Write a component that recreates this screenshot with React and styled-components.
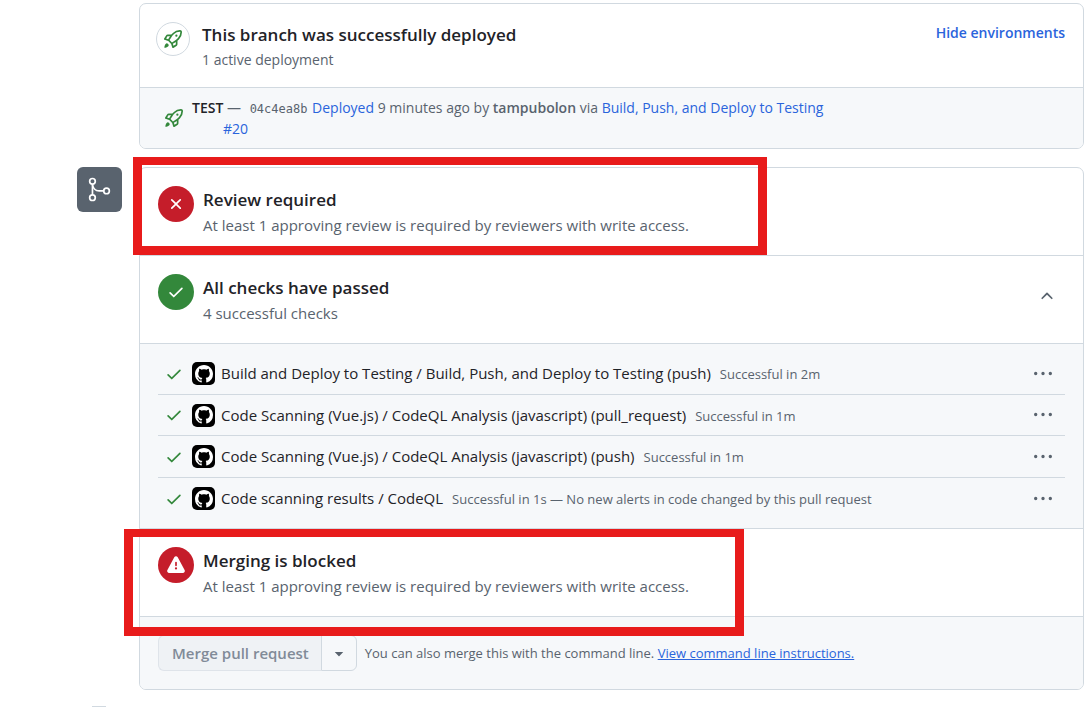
import React, { useState } from "react";
import styled, { createGlobalStyle, css } from "styled-components";
import { GoGitMerge } from "react-icons/go";

const color = {
  text: "#1f2328",
  muted: "#59636e",
  link: "#2a64dc",
  border: "#d1d9e0",
  subtle: "#f6f8fa",
  green: "#33883b",
  red: "#c51d2a",
  mark: "#e81b1b",
};

const GlobalStyle = createGlobalStyle`
  * { box-sizing: border-box; }
  body {
    margin: 0;
    background: #fff;
    color: ${color.text};
    font-family: "Open Sans", "Noto Sans", sans-serif;
    font-size: 15px;
    line-height: 22px;
  }
  h2, p, ul { margin: 0; padding: 0; }
  button { font: inherit; cursor: pointer; }
`;

const paths = {
  rocket:
    "M14.064 0h.186C15.216 0 16 .784 16 1.75v.186a8.752 8.752 0 0 1-2.564 6.186l-.458.459c-.314.314-.641.616-.979.904v3.207c0 .608-.315 1.172-.833 1.49l-2.774 1.707a.749.749 0 0 1-1.11-.418l-.954-3.102a1.214 1.214 0 0 1-.145-.125L3.754 9.816a1.218 1.218 0 0 1-.124-.145L.528 8.717a.749.749 0 0 1-.418-1.11l1.71-2.774A1.748 1.748 0 0 1 3.31 4h3.204c.288-.338.59-.665.904-.979l.459-.458A8.749 8.749 0 0 1 14.064 0ZM8.938 3.623h-.002l-.458.458c-.76.76-1.437 1.598-2.02 2.5l-1.5 2.317 2.143 2.143 2.317-1.5c.902-.583 1.74-1.26 2.499-2.02l.459-.458a7.25 7.25 0 0 0 2.123-5.127V1.75a.25.25 0 0 0-.25-.25h-.186a7.249 7.249 0 0 0-5.125 2.123ZM3.56 14.56c-.732.732-2.334 1.045-3.005 1.148a.234.234 0 0 1-.201-.064.234.234 0 0 1-.064-.201c.103-.671.416-2.273 1.15-3.003a1.502 1.502 0 1 1 2.12 2.12Zm6.94-3.935c-.088.06-.177.118-.266.175l-2.35 1.521.548 1.783 1.949-1.2a.25.25 0 0 0 .119-.213ZM3.678 8.116 5.2 5.766c.058-.09.117-.178.176-.266H3.309a.25.25 0 0 0-.213.119l-1.2 1.95ZM12 5a1 1 0 1 1-2 0 1 1 0 0 1 2 0Z",
  x: "M3.72 3.72a.75.75 0 0 1 1.06 0L8 6.94l3.22-3.22a.749.749 0 0 1 1.275.326.749.749 0 0 1-.215.734L9.06 8l3.22 3.22a.749.749 0 0 1-.326 1.275.749.749 0 0 1-.734-.215L8 9.06l-3.22 3.22a.751.751 0 0 1-1.042-.018.751.751 0 0 1-.018-1.042L6.94 8 3.72 4.78a.75.75 0 0 1 0-1.06Z",
  check:
    "M13.78 4.22a.75.75 0 0 1 0 1.06l-7.25 7.25a.75.75 0 0 1-1.06 0L2.22 9.28a.751.751 0 0 1 .018-1.042.751.751 0 0 1 1.042-.018L6 10.94l6.72-6.72a.75.75 0 0 1 1.06 0Z",
  alert:
    "M6.457 1.047c.659-1.234 2.427-1.234 3.086 0l6.082 11.378A1.75 1.75 0 0 1 14.082 15H1.918a1.75 1.75 0 0 1-1.543-2.575ZM8 5a.75.75 0 0 0-.75.75v2.5a.75.75 0 0 0 1.5 0v-2.5A.75.75 0 0 0 8 5Zm1 6a1 1 0 1 0-2 0 1 1 0 0 0 2 0Z",
  kebab:
    "M8 9a1.5 1.5 0 1 0 0-3 1.5 1.5 0 0 0 0 3ZM1.5 9a1.5 1.5 0 1 0 0-3 1.5 1.5 0 0 0 0 3Zm13 0a1.5 1.5 0 1 0 0-3 1.5 1.5 0 0 0 0 3Z",
  chevronUp:
    "M3.22 10.53a.749.749 0 0 1 0-1.06l4.25-4.25a.749.749 0 0 1 1.06 0l4.25 4.25a.749.749 0 1 1-1.06 1.06L8 6.811 4.28 10.53a.749.749 0 0 1-1.06 0Z",
  triangleDown:
    "m4.427 7.427 3.396 3.396a.25.25 0 0 0 .354 0l3.396-3.396A.25.25 0 0 0 11.396 7H4.604a.25.25 0 0 0-.177.427Z",
  github:
    "M8 0c4.42 0 8 3.58 8 8a8.013 8.013 0 0 1-5.45 7.59c-.4.08-.55-.17-.55-.38 0-.27.01-1.13.01-2.2 0-.75-.25-1.23-.54-1.48 1.78-.2 3.65-.88 3.65-3.95 0-.88-.31-1.59-.82-2.15.08-.2.36-1.02-.08-2.12 0 0-.67-.22-2.2.82-.64-.18-1.32-.27-2-.27-.68 0-1.36.09-2 .27-1.53-1.03-2.2-.82-2.2-.82-.44 1.1-.16 1.92-.08 2.12-.51.56-.82 1.28-.82 2.15 0 3.06 1.86 3.75 3.64 3.95-.23.2-.44.55-.51 1.07-.46.21-1.61.55-2.33-.66-.15-.24-.6-.83-1.23-.82-.67.01-.27.38.01.53.34.19.73.9.82 1.13.16.45.68 1.31 2.69.94 0 .67.01 1.3.01 1.49 0 .21-.15.45-.55.38A7.995 7.995 0 0 1 0 8c0-4.42 3.58-8 8-8Z",
};

const Svg = styled.svg`
  display: block;
  flex: none;
  fill: currentColor;
`;

function Icon({ name, size = 18 }) {
  return (
    <Svg viewBox="0 0 16 16" width={size} height={size} aria-hidden="true">
      <path d={paths[name]} />
    </Svg>
  );
}

const Timeline = styled.main`
  display: flex;
  flex-direction: column;
  gap: 18px;
  padding: 3px 6px 0 77px;
`;

const TimelineItem = styled.div`
  display: grid;
  grid-template-columns: 45px minmax(0, 1fr);
  column-gap: 17px;
`;

const MergeBadge = styled.div`
  display: grid;
  place-items: center;
  width: 45px;
  height: 45px;
  border-radius: 6px;
  background: ${color.muted};
  color: #fff;
`;

const Card = styled.section`
  grid-column: 2;
  border: 1px solid ${color.border};
  border-radius: 7px;
`;

const Section = styled.div`
  position: relative;
  display: flex;
  align-items: flex-start;
  gap: ${(p) => (p.$compact ? 12 : 9)}px;
  padding: ${(p) => (p.$compact ? "18px 18px 15px 16px" : "18px 18px 19px")};
  border-bottom: 1px solid ${color.border};
`;

const StatusCircle = styled.span`
  display: grid;
  place-items: center;
  flex: none;
  width: 36px;
  height: 36px;
  border-radius: 50%;
  color: #fff;
  background: ${(p) => p.$tone};
  ${(p) =>
    p.$outlined &&
    css`
      width: 34px;
      height: 34px;
      border: 1px solid ${color.border};
      background: #fff;
      color: ${color.green};
    `}
`;

const SectionText = styled.div`
  flex: 1;
  min-width: 0;
`;

const Title = styled.h2`
  font-size: 17px;
  line-height: ${(p) => (p.$compact ? 26 : 28)}px;
  font-weight: 600;
`;

const Description = styled.p`
  font-size: ${(p) => (p.$compact ? 14 : 15)}px;
  line-height: ${(p) => (p.$compact ? 24 : 22)}px;
  color: ${color.muted};
`;

const TextButton = styled.button`
  padding: 0;
  border: 0;
  background: none;
  color: ${color.link};
  font-size: 14px;
  font-weight: 600;
`;

const IconButton = styled.button`
  display: grid;
  place-items: center;
  width: 36px;
  height: ${(p) => (p.$tall ? 44 : 36)}px;
  padding: 0;
  border: 0;
  border-radius: 6px;
  background: none;
  color: ${color.muted};
`;

const Link = styled.a`
  color: ${color.link};
  text-decoration: ${(p) => (p.$underlined ? "underline" : "none")};
`;

const Deployment = styled.div`
  display: flex;
  align-items: center;
  gap: 9px;
  padding: 9px 25px;
  border-radius: 0 0 6px 6px;
  background: ${color.subtle};
  color: ${color.green};
`;

const DeploymentText = styled.p`
  max-width: 650px;
  padding-left: 31px;
  text-indent: -31px;
  font-size: 14px;
  line-height: 21px;
  color: ${color.muted};
`;

const Environment = styled.strong`
  font-weight: 600;
  color: ${color.text};
`;

const Author = styled.strong`
  font-weight: 600;
`;

const Sha = styled.code`
  margin: 0 1px 0 5px;
  font-family: "DejaVu Sans Mono", monospace;
  font-size: 12px;
  line-height: 12px;
`;

const CheckList = styled.ul`
  list-style: none;
  padding: 9px 18px;
  border-bottom: 1px solid ${color.border};
  background: ${color.subtle};
`;

const CheckRow = styled.li`
  display: flex;
  align-items: center;
  height: 42px;
  padding: 0 4px 0 7px;
  border-bottom: 1px solid ${color.border};
  color: ${color.green};

  &:nth-child(even) {
    height: 41px;
  }
  &:last-child {
    border-bottom: 0;
  }
`;

const Avatar = styled.span`
  display: grid;
  place-items: center;
  flex: none;
  width: 23px;
  height: 23px;
  margin: 0 6px 0 9px;
  border-radius: 5px;
  background: #000;
  color: #fff;
`;

const CheckText = styled.span`
  flex: 1;
  color: ${color.text};
`;

const CheckNote = styled.span`
  margin-left: 9px;
  font-size: 13px;
  color: ${color.muted};
`;

const Footer = styled.div`
  display: flex;
  align-items: center;
  gap: 8px;
  padding: 18px;
  border-radius: 0 0 6px 6px;
  background: ${color.subtle};
`;

const ButtonGroup = styled.div`
  display: flex;
  height: 36px;
`;

const MergeButton = styled.button`
  padding: 0 12px 0 13px;
  border: 1px solid #dfe4ea;
  border-right: 0;
  border-radius: 6px 0 0 6px;
  background: #eff2f5;
  color: #818b98;
  font-weight: 600;
`;

const MergeMenuButton = styled.button`
  display: grid;
  place-items: center;
  width: 36px;
  padding: 0;
  border: 1px solid ${color.border};
  border-radius: 0 6px 6px 0;
  background: ${color.subtle};
  color: ${color.muted};
`;

const Hint = styled.p`
  font-size: 13px;
  color: ${color.muted};
`;

/* Hand-drawn emphasis frame that lies over a section */
const Highlight = styled.div`
  position: absolute;
  top: ${(p) => p.$top}px;
  left: ${(p) => p.$left}px;
  width: ${(p) => p.$width}px;
  height: ${(p) => p.$height}px;
  border: 9px solid ${color.mark};
  border-top-width: 8px;
  pointer-events: none;
  z-index: 1;
`;

const NextEvent = styled.div`
  width: 14px;
  height: 1px;
  margin: -2px 0 0 15px;
  background: ${color.border};
`;

const checks = [
  ["Build and Deploy to Testing / Build, Push, and Deploy to Testing (push)", "Successful in 2m"],
  ["Code Scanning (Vue.js) / CodeQL Analysis (javascript) (pull_request)", "Successful in 1m"],
  ["Code Scanning (Vue.js) / CodeQL Analysis (javascript) (push)", "Successful in 1m"],
  ["Code scanning results / CodeQL", "Successful in 1s — No new alerts in code changed by this pull request"],
];

function Status({ icon, tone, title, text, children }) {
  return (
    <Section>
      <StatusCircle $tone={tone}>
        <Icon name={icon} />
      </StatusCircle>
      <SectionText>
        <Title>{title}</Title>
        <Description>{text}</Description>
      </SectionText>
      {children}
    </Section>
  );
}

export default function App() {
  const [showEnvironments, setShowEnvironments] = useState(true);
  const [showChecks, setShowChecks] = useState(true);
  const reviewText = "At least 1 approving review is required by reviewers with write access.";

  return (
    <>
      <GlobalStyle />
      <Timeline>
        <TimelineItem>
          <Card>
            <Section $compact>
              <StatusCircle $outlined>
                <Icon name="rocket" />
              </StatusCircle>
              <SectionText>
                <Title $compact>This branch was successfully deployed</Title>
                <Description $compact>1 active deployment</Description>
              </SectionText>
              <TextButton type="button" onClick={() => setShowEnvironments(!showEnvironments)}>
                {showEnvironments ? "Hide environments" : "Show environments"}
              </TextButton>
            </Section>
            {showEnvironments && (
              <Deployment>
                <Icon name="rocket" />
                <DeploymentText>
                  <Environment>TEST</Environment> — <Sha>04c4ea8b</Sha> <Link href="#deployed">Deployed</Link> 9
                  minutes ago by <Author>tampubolon</Author> via{" "}
                  <Link href="#workflow">Build, Push, and Deploy to Testing</Link>{" "}
                  <Link href="#run-20">#20</Link>
                </DeploymentText>
              </Deployment>
            )}
          </Card>
        </TimelineItem>

        <TimelineItem>
          <MergeBadge>
            <GoGitMerge size={27} />
          </MergeBadge>
          <Card>
            <Status icon="x" tone={color.red} title="Review required" text={reviewText}>
              <Highlight $top={-11} $left={-7} $width={634} $height={98} />
            </Status>
            <Status icon="check" tone={color.green} title="All checks have passed" text="4 successful checks">
              <IconButton $tall type="button" aria-label="Toggle checks" onClick={() => setShowChecks(!showChecks)}>
                <Icon name="chevronUp" />
              </IconButton>
            </Status>
            {showChecks && (
              <CheckList>
                {checks.map(([name, note]) => (
                  <CheckRow key={name}>
                    <Icon name="check" />
                    <Avatar>
                      <Icon name="github" />
                    </Avatar>
                    <CheckText>
                      {name}
                      <CheckNote>{note}</CheckNote>
                    </CheckText>
                    <IconButton type="button" aria-label="Check options">
                      <Icon name="kebab" />
                    </IconButton>
                  </CheckRow>
                ))}
              </CheckList>
            )}
            <Status icon="alert" tone={color.red} title="Merging is blocked" text={reviewText}>
              <Highlight $top={0} $left={-16} $width={620} $height={107} />
            </Status>
            <Footer>
              <ButtonGroup>
                <MergeButton type="button" disabled>
                  Merge pull request
                </MergeButton>
                <MergeMenuButton type="button" aria-label="Select merge method">
                  <Icon name="triangleDown" />
                </MergeMenuButton>
              </ButtonGroup>
              <Hint>
                You can also merge this with the command line.{" "}
                <Link href="#instructions" $underlined>
                  View command line instructions.
                </Link>
              </Hint>
            </Footer>
          </Card>
        </TimelineItem>
        <NextEvent />
      </Timeline>
    </>
  );
}
